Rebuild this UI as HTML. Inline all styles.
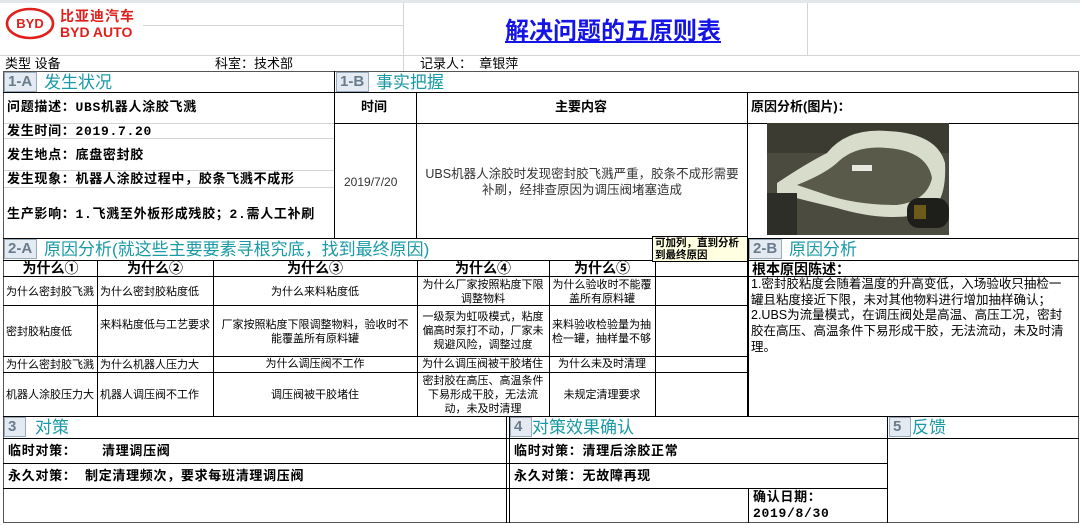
<!DOCTYPE html>
<html><head><meta charset="utf-8"><style>
*{margin:0;padding:0;box-sizing:border-box}
body{width:1080px;height:525px;background:#fff;position:relative;overflow:hidden;font-family:"Liberation Sans","Noto Sans CJK SC",sans-serif;color:#000}
.a{position:absolute}
.h{position:absolute;height:1px;background:#000}
.v{position:absolute;width:1px;background:#000}
.g{background:#d4d4d4}
.t{position:absolute;font-size:12px;line-height:14px;white-space:nowrap}
.b{font-weight:bold}
.m{font-family:"Liberation Mono","Noto Sans CJK SC",monospace;font-size:13px;letter-spacing:0.7px;line-height:15px}
.c{text-align:center;white-space:normal}
.lab{position:absolute;height:20px;border:1px solid #9ab;background:#e4eaf2;color:#6a7c8c;font-weight:bold;font-size:15px;line-height:18px;padding-left:3px}
.sec{position:absolute;color:#1a9aa6;font-size:17px;line-height:20px;white-space:nowrap}
</style></head><body>
<div class="a" style="left:0;top:0;width:1080px;height:3px;background:#e3e6ea"></div>
<div class="h g" style="left:0;top:55px;width:1080px"></div>
<div class="v g" style="left:403px;top:3px;height:68px"></div>
<div class="v g" style="left:807px;top:3px;height:52px"></div>
<div class="h g" style="left:143px;top:25px;width:260px"></div>
<svg class="a" style="left:5px;top:7px" width="50" height="33" viewBox="0 0 50 33"><ellipse cx="25" cy="16.5" rx="23" ry="14.5" fill="none" stroke="#e0201c" stroke-width="2.6"/><text x="25" y="21" text-anchor="middle" font-family="Liberation Sans" font-weight="bold" font-size="13" fill="#e0201c">BYD</text></svg>
<div class="t b" style="left:60px;top:8px;color:#e0201c;font-size:14px;line-height:16px;letter-spacing:1px">比亚迪汽车</div>
<div class="t b" style="left:60px;top:24px;color:#e0201c;font-size:14px;line-height:16px">BYD AUTO</div>
<div class="t b" style="left:505px;top:18px;font-size:24px;line-height:28px;color:#1414e6;text-decoration:underline">解决问题的五原则表</div>
<div class="t" style="left:5px;top:56px;font-size:13px;line-height:15px">类型 设备</div>
<div class="t" style="left:215px;top:56px;font-size:13px;line-height:15px">科室：技术部</div>
<div class="t" style="left:420px;top:56px;font-size:13px;line-height:15px">记录人：&nbsp;&nbsp;章银萍</div>
<div class="h" style="left:3px;top:71px;width:1076px;background:#555"></div>
<div class="v" style="left:1078px;top:71px;height:452px;background:#555"></div>
<div class="v" style="left:3px;top:71px;height:452px;background:#555"></div>
<div class="h" style="left:3px;top:522px;width:1076px;background:#555"></div>
<div class="h" style="left:3px;top:92px;width:1076px"></div>
<div class="v" style="left:334px;top:71px;height:167px"></div>
<div class="v" style="left:416px;top:92px;height:146px"></div>
<div class="v" style="left:747px;top:92px;height:146px"></div>
<div class="h" style="left:334px;top:123px;width:745px"></div>
<div class="h g" style="left:4px;top:123px;width:330px"></div>
<div class="h g" style="left:4px;top:138px;width:330px"></div>
<div class="h g" style="left:4px;top:170px;width:330px"></div>
<div class="h g" style="left:4px;top:187px;width:330px"></div>
<div class="lab" style="left:4px;top:72px;width:33px">1-A</div>
<div class="sec" style="left:44px;top:73px">发生状况</div>
<div class="lab" style="left:336px;top:72px;width:33px">1-B</div>
<div class="sec" style="left:376px;top:73px">事实把握</div>
<div class="t b m" style="left:7px;top:100px">问题描述：UBS机器人涂胶飞溅</div>
<div class="t b m" style="left:7px;top:124px">发生时间：2019.7.20</div>
<div class="t b m" style="left:7px;top:148px">发生地点：底盘密封胶</div>
<div class="t b m" style="left:7px;top:172px">发生现象：机器人涂胶过程中，胶条飞溅不成形</div>
<div class="t b m" style="left:7px;top:207px">生产影响：1.飞溅至外板形成残胶；2.需人工补刷</div>
<div class="t b" style="left:361px;top:100px;font-size:13px">时间</div>
<div class="t b" style="left:555px;top:100px;font-size:13px">主要内容</div>
<div class="t b" style="left:751px;top:100px;font-size:13px">原因分析(图片)：</div>
<div class="t" style="left:344px;top:175px;color:#333">2019/7/20</div>
<div class="t c" style="left:420px;top:166px;width:324px;color:#333;font-size:12.5px;line-height:16px">UBS机器人涂胶时发现密封胶飞溅严重，胶条不成形需要<br>补刷，经排查原因为调压阀堵塞造成</div>
<svg class="a" style="left:767px;top:123px" width="182" height="112" viewBox="0 0 182 112"><rect width="182" height="112" fill="#4b4b3f"/><rect x="0" y="0" width="182" height="30" fill="#3b3b32"/><path d="M10 60 Q40 40 60 30 Q80 5 120 8 Q170 10 178 40 Q180 80 160 90 Q120 100 70 85 Q40 78 10 70 Z" fill="#d7dccb"/><path d="M30 62 Q60 50 72 38 Q90 22 120 25 Q160 28 165 55 Q160 78 130 82 Q90 82 60 72 Z" fill="#5a5a4a"/><rect x="85" y="42" width="20" height="6" fill="#e8e8e0"/><rect x="0" y="70" width="30" height="42" fill="#2e2e28"/><rect x="140" y="75" width="42" height="30" rx="12" fill="#1e1e1a"/><rect x="147" y="82" width="12" height="14" fill="#6b5a1a"/></svg>
<div class="h" style="left:3px;top:238px;width:1076px"></div>
<div class="lab" style="left:4px;top:239px;width:33px">2-A</div>
<div class="sec" style="left:44px;top:240px">原因分析(就这些主要要素寻根究底，找到最终原因)</div>
<div class="lab" style="left:749px;top:239px;width:33px">2-B</div>
<div class="sec" style="left:789px;top:240px">原因分析</div>
<div class="h" style="left:3px;top:260px;width:1076px"></div>
<div class="h" style="left:3px;top:276px;width:1076px"></div>
<div class="h" style="left:3px;top:305px;width:745px"></div>
<div class="h" style="left:3px;top:356px;width:745px"></div>
<div class="h" style="left:3px;top:372px;width:745px"></div>
<div class="v" style="left:97px;top:260px;height:157px"></div>
<div class="v" style="left:213px;top:260px;height:157px"></div>
<div class="v" style="left:417px;top:260px;height:157px"></div>
<div class="v" style="left:549px;top:260px;height:157px"></div>
<div class="v" style="left:655px;top:260px;height:157px"></div>
<div class="v" style="left:747px;top:238px;height:179px;width:2px"></div>
<div class="t b c" style="left:4px;top:261px;width:93px;font-size:14px;line-height:15px">为什么①</div>
<div class="t b c" style="left:97px;top:261px;width:116px;font-size:14px;line-height:15px">为什么②</div>
<div class="t b c" style="left:213px;top:261px;width:204px;font-size:14px;line-height:15px">为什么③</div>
<div class="t b c" style="left:417px;top:261px;width:132px;font-size:14px;line-height:15px">为什么④</div>
<div class="t b c" style="left:549px;top:261px;width:106px;font-size:14px;line-height:15px">为什么⑤</div>
<div class="t" style="left:6px;top:285px;font-size:11px">为什么密封胶飞溅</div>
<div class="t" style="left:100px;top:285px;font-size:11px">为什么密封胶粘度低</div>
<div class="t c" style="left:213px;top:285px;width:204px;font-size:11px">为什么来料粘度低</div>
<div class="t c" style="left:419px;top:278px;width:128px;font-size:11px">为什么厂家按照粘度下限调整物料</div>
<div class="t c" style="left:551px;top:278px;width:102px;font-size:11px">为什么验收时不能覆盖所有原料罐</div>
<div class="t" style="left:6px;top:325px;font-size:11px">密封胶粘度低</div>
<div class="t" style="left:100px;top:318px;width:110px;white-space:normal;font-size:11px">来料粘度低与工艺要求</div>
<div class="t c" style="left:217px;top:318px;width:196px;font-size:11px">厂家按照粘度下限调整物料，验收时不能覆盖所有原料罐</div>
<div class="t c" style="left:419px;top:310px;width:128px;font-size:11px">一级泵为虹吸模式，粘度偏高时泵打不动，厂家未规避风险，调整过度</div>
<div class="t" style="left:552px;top:318px;width:102px;white-space:normal;font-size:11px">来料验收检验量为抽检一罐，抽样量不够</div>
<div class="t" style="left:6px;top:358px;font-size:11px">为什么密封胶飞溅</div>
<div class="t" style="left:100px;top:358px;font-size:11px">为什么机器人压力大</div>
<div class="t c" style="left:213px;top:357px;width:204px;font-size:11px">为什么调压阀不工作</div>
<div class="t" style="left:422px;top:357px;font-size:11px">为什么调压阀被干胶堵住</div>
<div class="t c" style="left:549px;top:357px;width:106px;font-size:11px">为什么未及时清理</div>
<div class="t" style="left:6px;top:388px;font-size:11px">机器人涂胶压力大</div>
<div class="t" style="left:100px;top:388px;font-size:11px">机器人调压阀不工作</div>
<div class="t c" style="left:213px;top:388px;width:204px;font-size:11px">调压阀被干胶堵住</div>
<div class="t c" style="left:419px;top:374px;width:128px;font-size:11px">密封胶在高压、高温条件下易形成干胶，无法流动，未及时清理</div>
<div class="t c" style="left:549px;top:388px;width:106px;font-size:11px">未规定清理要求</div>
<div class="t b" style="left:752px;top:262px;font-size:14px;line-height:15px">根本原因陈述：</div>
<div class="t" style="left:751px;top:277px;font-size:12.5px;line-height:15.7px">1.密封胶粘度会随着温度的升高变低，入场验收只抽检一<br>罐且粘度接近下限，未对其他物料进行增加抽样确认；<br>2.UBS为流量模式，在调压阀处是高温、高压工况，密封<br>胶在高压、高温条件下易形成干胶，无法流动，未及时清<br>理。</div>
<div class="a" style="left:652px;top:236px;width:96px;height:26px;background:#ffffe1;border:1px solid #000;font-size:10.5px;line-height:12px;font-weight:bold;padding:0 2px;overflow:hidden">可加列，直到分析到最终原因</div>
<div class="h" style="left:3px;top:416px;width:1076px"></div>
<div class="v" style="left:506px;top:416px;height:107px"></div>
<div class="v" style="left:509px;top:416px;height:107px"></div>
<div class="v" style="left:887px;top:416px;height:107px"></div>
<div class="h" style="left:3px;top:438px;width:1076px"></div>
<div class="h" style="left:3px;top:463px;width:884px"></div>
<div class="h" style="left:3px;top:488px;width:884px"></div>
<div class="v" style="left:748px;top:488px;height:35px"></div>
<div class="lab" style="left:4px;top:417px;width:22px">3</div>
<div class="sec" style="left:35px;top:418px">对策</div>
<div class="lab" style="left:510px;top:417px;width:22px">4</div>
<div class="sec" style="left:532px;top:418px">对策效果确认</div>
<div class="lab" style="left:889px;top:417px;width:22px">5</div>
<div class="sec" style="left:912px;top:418px">反馈</div>
<div class="t b m" style="left:8px;top:444px">临时对策：&nbsp;&nbsp;&nbsp;清理调压阀</div>
<div class="t b m" style="left:8px;top:469px">永久对策：&nbsp;制定清理频次，要求每班清理调压阀</div>
<div class="t b m" style="left:514px;top:444px">临时对策：清理后涂胶正常</div>
<div class="t b m" style="left:514px;top:469px">永久对策：无故障再现</div>
<div class="t b m" style="left:753px;top:490px">确认日期：</div>
<div class="t b m" style="left:753px;top:506px">2019/8/30</div>
</body></html>
